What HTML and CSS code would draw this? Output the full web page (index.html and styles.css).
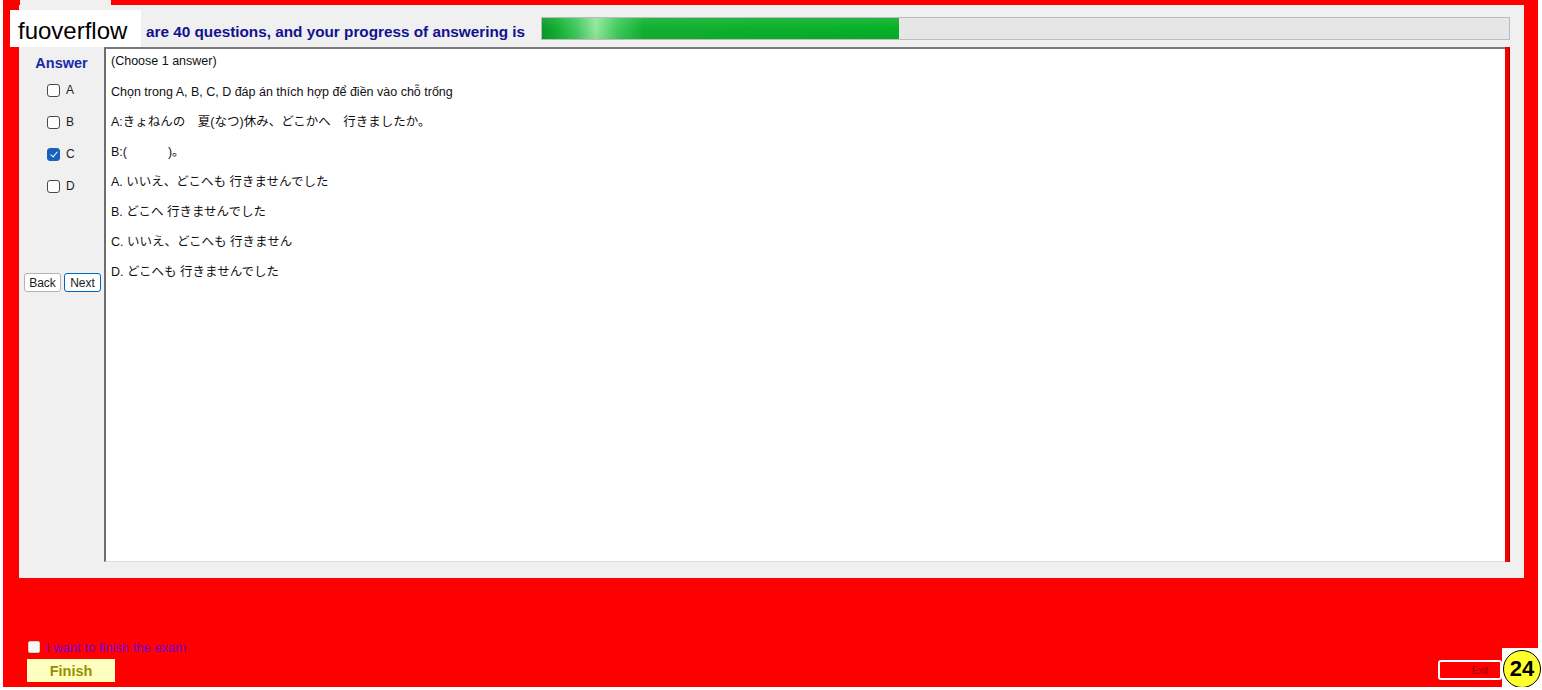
FILE: index.html
```html
<!DOCTYPE html>
<html lang="vi">
<head>
    <meta charset="UTF-8">
    <meta name="viewport" content="width=device-width, initial-scale=1.0">
    <title>Exam</title>
    <link rel="stylesheet" href="styles.css">
</head>
<body>
    <div class="frame">
        <div class="brand">fuoverflow</div>
        <div class="tabstrip"><div class="tab"></div></div>

        <div class="panel">
            <div class="head">
                <div class="title">are 40 questions, and your progress of answering is</div>
                <div class="progress"><div class="progress-fill" style="width: 357px"></div></div>
            </div>

            <div class="body">
                <div class="answers">
                    <div class="answers-title">Answer</div>
                    <label class="option"><input type="checkbox"> A</label>
                    <label class="option"><input type="checkbox"> B</label>
                    <label class="option"><input type="checkbox" checked> C</label>
                    <label class="option"><input type="checkbox"> D</label>
                    <div class="nav">
                        <button type="button">Back</button>
                        <button type="button" class="next">Next</button>
                    </div>
                </div>

                <div class="question">
                    <p class="hint">(Choose 1 answer)</p>
                    <p>Chọn trong A, B, C, D đáp án thích hợp để điền vào chỗ trống</p>
                    <p>A:きょねんの　夏(なつ)休み、どこかへ　行きましたか。</p>
                    <p>B:(　　　 )。</p>
                    <p>A. いいえ、どこへも 行きませんでした</p>
                    <p>B. どこへ 行きませんでした</p>
                    <p>C. いいえ、どこへも 行きません</p>
                    <p>D. どこへも 行きませんでした</p>
                </div>
                <div class="question-edge"></div>
            </div>
        </div>

        <div class="foot">
            <div class="finish-group">
                <label class="confirm"><input type="checkbox"> I want to finish the exam</label>
                <button type="button" class="finish">Finish</button>
            </div>
            <button type="button" class="exit">Exit</button>
        </div>

        <div class="counter"><span>24</span></div>
    </div>
</body>
</html>
```

FILE: styles.css
```css
body {
    margin: 0;
    background-color: #fff;
    font-family: "Liberation Sans", Arial, "Noto Sans CJK JP", sans-serif;
}
.frame { /* marco rojo de toda la ventana */
    position: relative;
    margin-left: 3px;
    width: 1535px;
    height: 687px;
    background-color: #ff0000;
    padding-left: 16px;
    box-sizing: border-box;
    display: flex;
    flex-direction: column;
}
.brand {
    position: absolute;
    left: 7px;
    top: 10px;
    width: 131px;
    height: 37px;
    background-color: #fff;
    color: #000;
    font-size: 24px;
    line-height: 42px;
    padding-left: 8px;
    box-sizing: border-box;
    z-index: 2;
}
.tabstrip {
    height: 5px;
}
.tab {
    margin-left: 1px;
    width: 91px;
    height: 5px;
    background-color: #f0f0f0;
}

.panel {
    width: 1505px;
    height: 573px;
    background-color: #f0f0f0;
    display: flex;
    flex-direction: column;
}
.head {
    height: 42px;
    display: flex;
    align-items: flex-start;
    padding-top: 12px;
    box-sizing: border-box;
}
.title {
    margin-left: 127px;
    margin-top: 5px;
    font-size: 15.3px;
    line-height: 20px;
    font-weight: bold;
    color: #12128f;
    white-space: nowrap;
}
.progress {
    margin-left: auto;
    margin-right: 14px;
    width: 969px;
    height: 23px;
    background-color: #e6e6e6;
    border: 1px solid #bcbcbc;
    box-sizing: border-box;
}
.progress-fill {
    height: 100%;
    background:
        linear-gradient(to bottom, rgba(255, 255, 255, 0.1), rgba(255, 255, 255, 0) 50%, rgba(0, 0, 0, 0.04)),
        linear-gradient(to right, #0a9a2a 0, #12ae32 14px, #3fc85c 34px, #8fe89b 54px, #3fc85c 76px, #10b030 102px, #07b027 100%);
}

.body {
    height: 515px;
    display: flex;
}
.answers {
    width: 85px;
    padding-top: 8px;
    box-sizing: border-box;
}
.answers-title {
    text-align: center;
    font-size: 14.5px;
    line-height: 16px;
    font-weight: bold;
    color: #1b2aa6;
    margin-bottom: 3px;
}
.option {
    height: 32px;
    display: flex;
    align-items: center;
    gap: 6px;
    padding-left: 28px;
    font-size: 12px;
    color: #222;
}
.option input {
    appearance: none;
    margin: 0;
    width: 13px;
    height: 13px;
    border: 1px solid #4a4a4a;
    border-radius: 3px;
    background-color: #fff;
    box-sizing: border-box;
    position: relative;
}
.option input:checked {
    background-color: #1961bd;
    border-color: #1961bd;
}
.option input:checked::after { /* marca de verificación */
    content: "";
    position: absolute;
    left: 3.5px;
    top: 1.5px;
    width: 3px;
    height: 6px;
    border: solid #fff;
    border-width: 0 1px 1px 0;
    transform: rotate(40deg);
}
.nav {
    margin-top: 71px;
    padding-left: 5px;
    display: flex;
    gap: 3px;
}
.nav button {
    width: 37px;
    height: 19px;
    padding: 0;
    background-color: #fff;
    border: 1px solid #b4b4b4;
    border-radius: 3px;
    font-family: inherit;
    font-size: 12px;
    color: #1a1a1a;
}
.nav .next {
    border-color: #0067c0;
}

.question {
    width: 1401px;
    background-color: #fff;
    border-top: 2px solid #7a7a7a;
    border-left: 2px solid #6e6e6e;
    border-bottom: 1px solid #dedede;
    box-sizing: border-box;
    padding-left: 5px;
    font-size: 12.5px;
    color: #111;
}
.question p {
    margin: 0;
    line-height: 30px;
    white-space: pre;
}
.question .hint {
    line-height: 25px;
    margin-bottom: 3px;
}
.question-edge { /* franja roja a la derecha del cuadro */
    width: 5px;
    background-color: #f40000;
    border-right: 1px solid #b00000;
    box-sizing: border-box;
}

.foot {
    margin-top: auto;
    padding-bottom: 5px;
    display: flex;
    align-items: flex-end;
    justify-content: space-between;
}
.finish-group {
    display: flex;
    flex-direction: column;
    align-items: flex-start;
}
.confirm {
    margin-left: 9px;
    margin-bottom: 4px;
    height: 16px;
    display: flex;
    align-items: center;
    gap: 6px;
    font-size: 13px;
    color: #7200d6;
}
.confirm input {
    appearance: none;
    margin: 0;
    width: 12px;
    height: 12px;
    background-color: #f7f7f7;
    border: 1px solid #d0d0d0;
    border-radius: 2px;
    box-sizing: border-box;
}
.finish {
    margin-left: 8px;
    width: 88px;
    height: 23px;
    padding: 0;
    background-color: #ffffc0;
    border: none;
    font-family: inherit;
    font-size: 14.5px;
    font-weight: bold;
    color: #929200;
}
.exit {
    margin-right: 36px;
    margin-bottom: 2px;
    width: 64px;
    height: 20px;
    padding: 0 0 0 20px;
    background-color: #ff0000;
    border: 2px solid #fff;
    border-radius: 3px;
    font-family: inherit;
    font-size: 10px;
    color: #a00000;
}

.counter {
    position: absolute;
    left: 1499px;
    top: 648px;
    width: 40px;
    height: 42px;
    background-color: #fff;
    display: flex;
    align-items: center;
    justify-content: center;
}
.counter span {
    width: 36px;
    height: 36px;
    border: 1.5px solid #000;
    border-radius: 50%;
    background-color: #ffff2e;
    display: flex;
    align-items: center;
    justify-content: center;
    font-size: 22px;
    font-weight: bold;
    color: #000;
}
```
